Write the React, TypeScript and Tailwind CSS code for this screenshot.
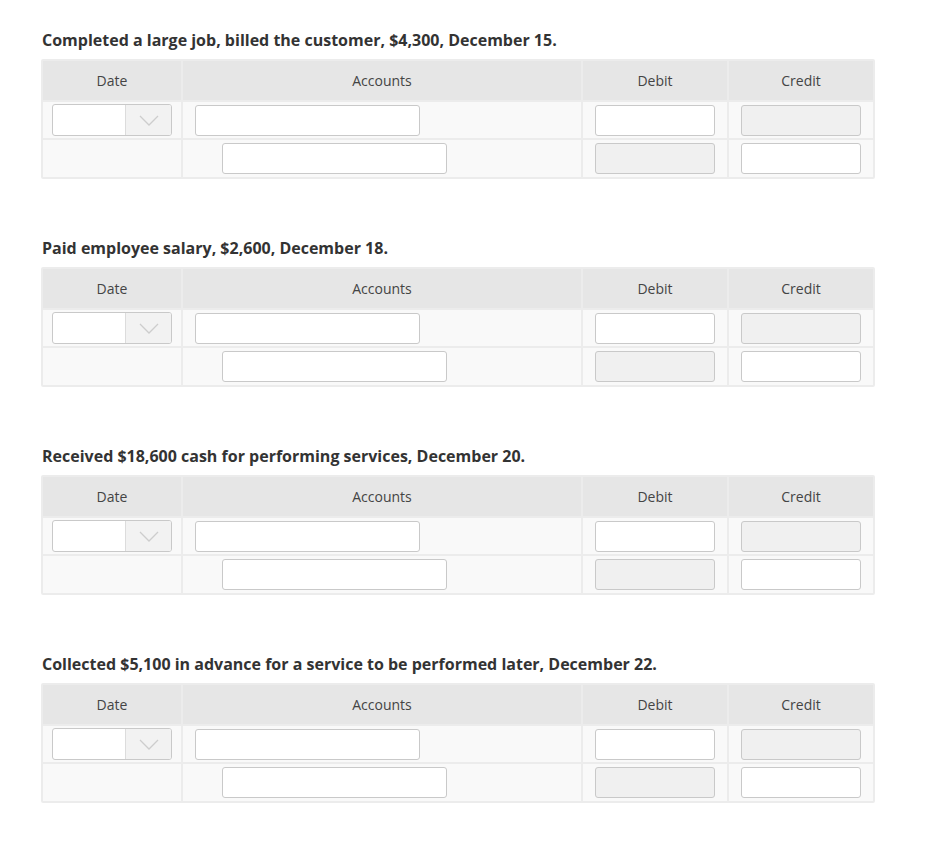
const entries = [
  'Completed a large job, billed the customer, $4,300, December 15.',
  'Paid employee salary, $2,600, December 18.',
  'Received $18,600 cash for performing services, December 20.',
  'Collected $5,100 in advance for a service to be performed later, December 22.',
];

function TextBox({ disabled, className = '' }: { disabled?: boolean; className?: string }) {
  return (
    <div
      className={`h-[31px] w-[120px] rounded-[3px] border border-[#c9c9c9] ${disabled ? 'bg-[#f0f0f0]' : 'bg-white'} ${className}`}
    />
  );
}

function DateSelect() {
  return (
    <div className="flex h-[32px] w-[120px] overflow-hidden rounded-[3px] border border-[#c9c9c9] bg-white">
      <div className="flex-1" />
      <div className="flex w-[46px] items-center justify-center border-l border-[#dcdcdc] bg-[#f2f2f2]">
        <svg width="20" height="11" viewBox="0 0 20 11" fill="none">
          <path d="M1 1l9 9 9-9" stroke="#cdcdcd" strokeWidth="1.3" />
        </svg>
      </div>
    </div>
  );
}

function JournalTable() {
  return (
    <div className="grid w-[834px] grid-cols-[138px_398px_144px_144px] gap-[2px] rounded-[2px] bg-[#ececec] p-[2px] text-[14px] text-[#444444]">
      {/* header */}
      <div className="flex h-[39px] items-center justify-center bg-[#e6e6e6]">Date</div>
      <div className="flex h-[39px] items-center justify-center bg-[#e6e6e6]">Accounts</div>
      <div className="flex h-[39px] items-center justify-center bg-[#e6e6e6]">Debit</div>
      <div className="flex h-[39px] items-center justify-center bg-[#e6e6e6]">Credit</div>

      {/* debit line */}
      <div className="flex h-[36px] items-center justify-center bg-[#f9f9f9]">
        <DateSelect />
      </div>
      <div className="flex h-[36px] items-center bg-[#f9f9f9] pl-[12px]">
        <TextBox className="w-[225px]" />
      </div>
      <div className="flex h-[36px] items-center justify-center bg-[#f9f9f9]">
        <TextBox />
      </div>
      <div className="flex h-[36px] items-center justify-center bg-[#f9f9f9]">
        <TextBox disabled />
      </div>

      {/* credit line */}
      <div className="h-[37px] bg-[#f9f9f9]" />
      <div className="flex h-[37px] items-center bg-[#f9f9f9] pl-[39px]">
        <TextBox className="w-[225px]" />
      </div>
      <div className="flex h-[37px] items-center justify-center bg-[#f9f9f9]">
        <TextBox disabled />
      </div>
      <div className="flex h-[37px] items-center justify-center bg-[#f9f9f9]">
        <TextBox />
      </div>
    </div>
  );
}

export default function App() {
  return (
    <div className="min-h-[841px] bg-white pl-[41px] pt-[30px] font-['Open_Sans',sans-serif]">
      {entries.map((text, i) => (
        <div key={i} className={i > 0 ? 'mt-[59px]' : ''}>
          <h3 className="ml-[1px] h-[20px] text-[16px] font-bold leading-[20px] text-[#333333]">{text}</h3>
          <div className="mt-[9px]">
            <JournalTable />
          </div>
        </div>
      ))}
    </div>
  );
}
